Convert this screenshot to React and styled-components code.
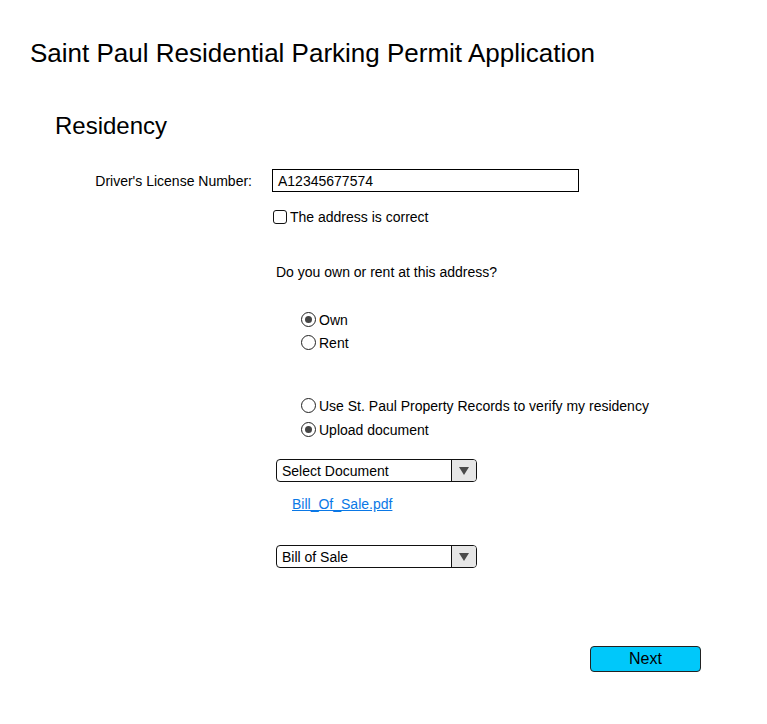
import React from 'react'
import styled, { createGlobalStyle } from 'styled-components'

const GlobalStyle = createGlobalStyle`
  body {
    margin: 0;
    background: #ffffff;
    font-family: 'Liberation Sans', Arial, sans-serif;
    color: #000;
  }
`

const Page = styled.div`
  width: 767px;
  height: 724px;
  padding-top: 39px;
  box-sizing: border-box;
`

const Title = styled.h1`
  margin: 0 0 0 30px;
  font-size: 26px;
  font-weight: normal;
  line-height: 28px;
`

const SectionTitle = styled.h2`
  margin: 45px 0 0 55px;
  font-size: 24px;
  font-weight: normal;
  line-height: 28px;
`

const Form = styled.div`
  margin-top: 29px;
  display: flex;
  flex-direction: column;
`

const Row = styled.div`
  display: flex;
  align-items: center;
`

const Label = styled.label`
  width: 272px;
  padding-right: 20px;
  box-sizing: border-box;
  text-align: right;
  font-size: 14px;
`

const TextInput = styled.div`
  width: 307px;
  height: 23px;
  box-sizing: border-box;
  border: 1px solid #000;
  padding-left: 5px;
  display: flex;
  align-items: center;
  font-size: 14px;
`

const Field = styled.div`
  margin-left: ${p => 272 + (p.indent || 0)}px;
  margin-top: ${p => p.top || 0}px;
  display: flex;
  flex-direction: column;
  gap: ${p => p.gap || 0}px;
  font-size: 14px;
`

const Choice = styled.div`
  display: flex;
  align-items: center;
  gap: 3px;
  height: 17px;
  font-size: 14px;
`

const Box = styled.span`
  width: 14px;
  height: 14px;
  box-sizing: border-box;
  border: 1px solid #111;
  border-radius: 3px;
`

const Radio = styled.span`
  width: 15px;
  height: 15px;
  box-sizing: border-box;
  border: 1px solid #222;
  border-radius: 50%;
  display: flex;
  align-items: center;
  justify-content: center;

  &::after {
    content: '';
    display: ${p => (p.checked ? 'block' : 'none')};
    width: 7px;
    height: 7px;
    border-radius: 50%;
    background: #444;
  }
`

const Select = styled.div`
  width: 201px;
  height: 23px;
  box-sizing: border-box;
  border: 1px solid #111;
  border-radius: 4px;
  display: flex;
  overflow: hidden;
  font-size: 14px;
`

const SelectText = styled.span`
  flex: 1;
  padding-left: 5px;
  display: flex;
  align-items: center;
`

const Arrow = styled.span`
  width: 24px;
  border-left: 1px solid #111;
  background: #e6e6e6;
  display: flex;
  align-items: center;
  justify-content: center;

  &::after {
    content: '';
    border-left: 5px solid transparent;
    border-right: 5px solid transparent;
    border-top: 8px solid #4a4a4a;
  }
`

const DocLink = styled.a`
  color: #0a78e6;
  text-decoration: underline;
  font-size: 14px;
`

const Footer = styled.div`
  margin-top: 78px;
  padding-left: 590px;
`

const NextButton = styled.button`
  width: 111px;
  height: 26px;
  background: #00c8fa;
  border: 1px solid #222;
  border-radius: 4px;
  font-family: inherit;
  font-size: 16px;
  color: #000;
  padding: 0;
`

const Dropdown = ({ value }) => (
  <Select>
    <SelectText>{value}</SelectText>
    <Arrow />
  </Select>
)

const App = () => (
  <Page>
    <GlobalStyle />
    <Title>Saint Paul Residential Parking Permit Application</Title>
    <SectionTitle>Residency</SectionTitle>
    <Form>
      <Row>
        <Label>Driver's License Number:</Label>
        <TextInput>A12345677574</TextInput>
      </Row>
      <Field indent={1} top={16}>
        <Choice>
          <Box />
          The address is correct
        </Choice>
      </Field>
      <Field indent={4} top={38}>
        <Choice>Do you own or rent at this address?</Choice>
      </Field>
      <Field indent={29} top={31} gap={6}>
        <Choice>
          <Radio checked />
          Own
        </Choice>
        <Choice>
          <Radio />
          Rent
        </Choice>
      </Field>
      <Field indent={29} top={46} gap={7}>
        <Choice>
          <Radio />
          Use St. Paul Property Records to verify my residency
        </Choice>
        <Choice>
          <Radio checked />
          Upload document
        </Choice>
      </Field>
      <Field indent={4} top={21}>
        <Dropdown value="Select Document" />
      </Field>
      <Field indent={20} top={14}>
        <DocLink href="#">Bill_Of_Sale.pdf</DocLink>
      </Field>
      <Field indent={4} top={33}>
        <Dropdown value="Bill of Sale" />
      </Field>
    </Form>
    <Footer>
      <NextButton>Next</NextButton>
    </Footer>
  </Page>
)

export default App
